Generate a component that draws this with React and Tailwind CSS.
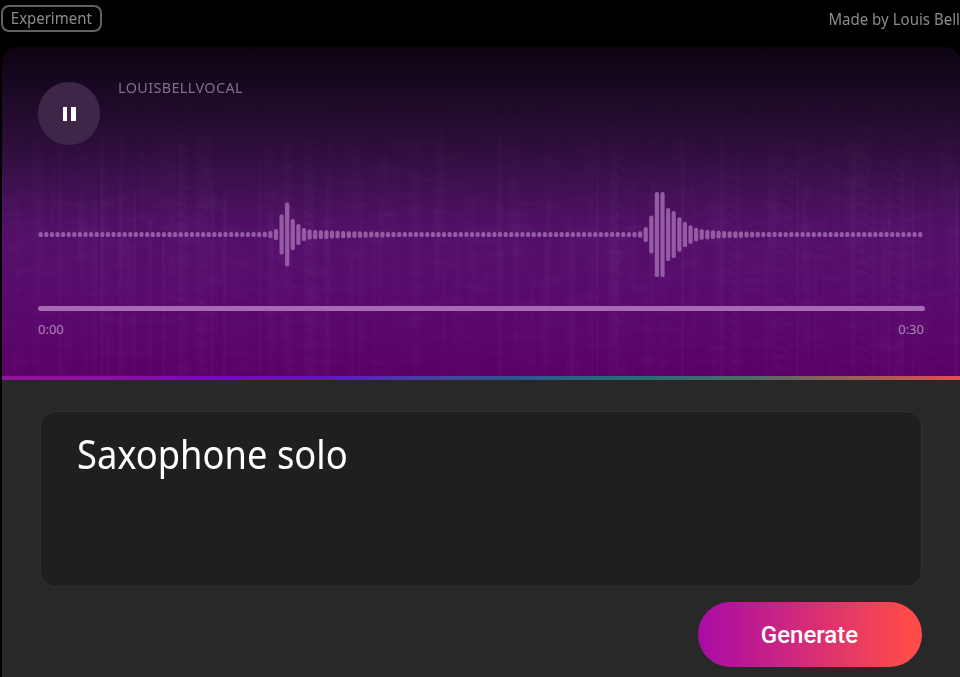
const REST = 5;
const PEAKS = {
  40: 5.5, 41: 7, 42: 11, 43: 40, 44: 64, 45: 31, 46: 21, 47: 13, 48: 10, 49: 9.2,
  50: 8.8, 51: 8.6, 52: 8, 53: 7.8, 54: 7.4, 55: 7, 56: 6.8, 57: 6.5, 58: 6.2,
  59: 6, 60: 5.8, 61: 5.6, 62: 5.4, 63: 5.2,
  106: 5.2, 107: 6.5, 108: 15, 109: 38, 110: 85, 111: 85, 112: 53, 113: 47, 114: 34.5,
  115: 25, 116: 18.5, 117: 13.5, 118: 10.5, 119: 9.6, 120: 8.6, 121: 7.6, 122: 7,
  123: 6.8, 124: 6.6, 125: 6.4, 126: 6, 127: 5.8, 128: 5.5, 129: 5.3, 130: 5.2,
};
const BARS = Array.from({ length: 158 }, (_, i) => PEAKS[i] ?? REST);

// x, top, width, opacity of the faint spectrogram streaks
const STREAKS = [
  [58, 120, 4, 0.03], [92, 200, 5, 0.03], [101, 150, 2, 0.05], [119, 130, 4, 0.04],
  [133, 190, 3, 0.035], [148, 220, 4, 0.04], [162, 240, 3, 0.045], [178, 130, 8, 0.03],
  [196, 120, 7, 0.025], [211, 180, 3, 0.04], [223, 190, 4, 0.035], [259, 130, 2, 0.03],
  [268, 210, 5, 0.035], [284, 120, 7, 0.025], [304, 140, 9, 0.03], [326, 180, 3, 0.03],
  [350, 260, 4, 0.03], [373, 230, 3, 0.02], [413, 250, 3, 0.02], [442, 260, 3, 0.02],
  [497, 90, 5, 0.035], [545, 240, 3, 0.025], [571, 240, 4, 0.03], [596, 140, 3, 0.04],
  [609, 110, 9, 0.03], [633, 180, 2, 0.03], [650, 180, 5, 0.025], [681, 120, 3, 0.04],
  [720, 130, 4, 0.045], [736, 160, 5, 0.025], [764, 250, 4, 0.025], [796, 130, 3, 0.04],
  [814, 260, 3, 0.025], [851, 140, 5, 0.04], [872, 200, 4, 0.03], [888, 180, 3, 0.03],
  [900, 170, 4, 0.03], [912, 180, 3, 0.03], [955, 180, 3, 0.05],
];
const RIPPLES = [[178, 12], [196, 10], [284, 10], [304, 12], [612, 14], [724, 14], [775, 16], [856, 16], [886, 16]];

function Texture() {
  return (
    <svg className="absolute inset-0 h-full w-full" viewBox="2 47 958 329" preserveAspectRatio="none" aria-hidden="true">
      <defs>
        <linearGradient id="fade" x1="0" y1="47" x2="0" y2="376" gradientUnits="userSpaceOnUse">
          <stop offset="0.15" stopColor="#fff" stopOpacity="0" />
          <stop offset="0.5" stopColor="#fff" stopOpacity="1" />
          <stop offset="1" stopColor="#fff" stopOpacity="0.8" />
        </linearGradient>
        <mask id="m" maskUnits="userSpaceOnUse" x="0" y="47" width="960" height="329">
          <rect y="47" width="960" height="329" fill="url(#fade)" />
        </mask>
        <filter id="streak" x="0" y="0" width="1" height="1">
          <feTurbulence type="fractalNoise" baseFrequency="0.09 0.004" numOctaves="2" seed="4" />
          <feColorMatrix values="0 0 0 0 0.62  0 0 0 0 0.36  0 0 0 0 0.68  1.1 0 0 0 -0.48" />
        </filter>
        <filter id="grain" x="0" y="0" width="1" height="1">
          <feTurbulence type="fractalNoise" baseFrequency="0.03 0.12" numOctaves="2" seed="9" />
          <feColorMatrix values="0 0 0 0 0.6  0 0 0 0 0.36  0 0 0 0 0.7  0.9 0 0 0 -0.4" />
        </filter>
      </defs>
      <g mask="url(#m)">
        <rect x="2" y="47" width="958" height="329" filter="url(#streak)" opacity="0.09" />
        <rect x="2" y="47" width="958" height="329" filter="url(#grain)" opacity="0.1" />
        {STREAKS.map(([x, y, w, o]) => (
          <rect key={x} x={x} y={y} width={w} height={376 - y} fill="#c9a0e0" opacity={o} />
        ))}
        {RIPPLES.map(([x, w]) =>
          Array.from({ length: 26 }, (_, i) => (
            <path key={x + "-" + i} d={`M${x} ${126 + i * 9.6}l${w * 0.5} 2.5 ${w * 0.5} 5`} fill="none" stroke="#b98ad0" strokeOpacity="0.06" strokeWidth="1.5" />
          ))
        )}
      </g>
    </svg>
  );
}

function Waveform() {
  return (
    <svg className="mt-[45px] block h-[90px] w-full" viewBox="38 190 886 90" aria-hidden="true">
      {BARS.map((h, i) => (
        <rect key={i} x={38.6 + i * 5.602} y={234.6 - h / 2} width="4.2" height={h} rx="1.9" fill="#955ba5" />
      ))}
    </svg>
  );
}

export default function App() {
  return (
    <div className="flex h-[677px] w-[960px] flex-col overflow-hidden bg-black font-['Noto_Sans',sans-serif]">
      <header className="flex h-[47px] shrink-0 items-start justify-between pl-[1px] pt-[5px]">
        <span className="flex h-[27px] w-[101px] items-center justify-center rounded-[8px] border-2 border-[#626262] pb-[2px] text-[16px] leading-none text-[#8b8b8b]">
          <span className="scale-x-[0.935]">Experiment</span>
        </span>
        <span className="origin-right scale-x-[0.94] whitespace-nowrap pt-[4px] text-[16px] leading-5 text-[#8b8b8b]">Made by Louis Bell</span>
      </header>

      <main className="ml-[2px] flex flex-1 flex-col">
        <section className="relative h-[329px] overflow-hidden rounded-t-[14px] bg-[linear-gradient(180deg,#0d0410_0%,#160820_10%,#240c2f_22%,#330f43_35%,#461059_47%,#541069_57%,#570c6c_72%,#5a066b_88%,#5a0067_100%)]">
          <Texture />
          <div className="relative flex h-full flex-col pl-[36px] pr-[36px] pt-[35px]">
            <div className="flex h-[63px] items-start gap-[18px]">
              <button className="flex h-[63px] w-[62px] items-center justify-center gap-[4px] rounded-full bg-[#3d2648]" aria-label="Pause">
                <span className="h-[14px] w-[4.5px] bg-white" />
                <span className="h-[14px] w-[4.5px] bg-white" />
              </button>
              <span className="origin-left scale-x-[0.96] whitespace-nowrap text-[15px] leading-[11px] tracking-[0.4px] text-[#80708a]">LOUISBELLVOCAL</span>
            </div>
            <Waveform />
            <div className="mt-[26px] h-[5px] w-[887px] shrink-0 rounded-full bg-[#a56cb1]" />
            <div className="mt-[8px] flex justify-between text-[13px] leading-5 text-[#ad83ba]">
              <span className="origin-left">0:00</span>
              <span className="origin-right">0:30</span>
            </div>
          </div>
        </section>
        <div className="h-[3.5px] shrink-0 bg-[linear-gradient(90deg,#94129a_0%,#8c0fa5_12%,#7608b8_23%,#6512c4_33%,#493fa3_44%,#2c5990_55%,#246f75_66%,#50696a_78%,#95605b_88%,#e05050_100%)]" />

        <section className="flex flex-1 flex-col bg-[#282828] pl-[38px] pr-[38px] pt-[31.5px]">
          <div className="h-[176px] w-[882px] rounded-[16px] border-[1.5px] border-[#303030] bg-[#1f1f1f] pl-[36px] pt-[17px]">
            <p className="w-max origin-left scale-x-[0.908] whitespace-nowrap text-[40px] leading-[50px] text-white">Saxophone solo</p>
          </div>
          <button className="mt-[15px] flex h-[65px] w-[224px] items-center justify-center self-end rounded-full bg-[linear-gradient(90deg,#a90ca5_0%,#b5149a_14%,#ff4c4a_95%)] pr-[1px] font-['Roboto',sans-serif] text-[24px] font-medium text-white">
            Generate
          </button>
        </section>
      </main>
    </div>
  );
}
